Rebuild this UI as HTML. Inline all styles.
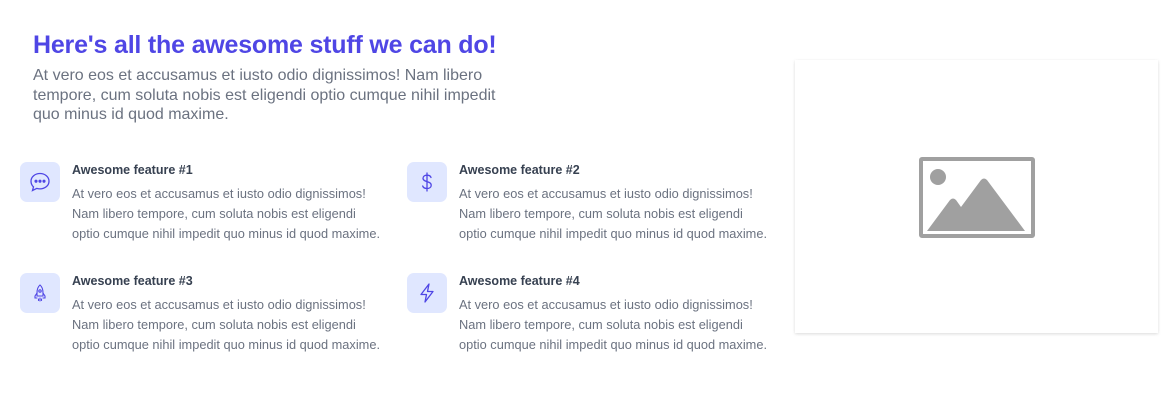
<!DOCTYPE html>
<html><head><meta charset="utf-8"><style>
*{margin:0;padding:0;box-sizing:border-box}
body{width:1176px;height:400px;background:#fff;font-family:"Liberation Sans",sans-serif;position:relative;overflow:hidden}
h1{position:absolute;left:33px;top:31px;font-size:25px;font-weight:bold;color:#4f46e5;white-space:nowrap;letter-spacing:-0.2px}
.sub{position:absolute;left:33px;top:66px;font-size:16px;line-height:19.5px;color:#6b7280;white-space:nowrap}
.f{position:absolute}
.ic{position:absolute;left:0;top:0;width:40px;height:40px;border-radius:7px;background:#e0e7ff;display:flex;align-items:center;justify-content:center}
.t{position:absolute;left:52px;top:1px;font-size:12.5px;font-weight:bold;color:#374151;white-space:nowrap}
.d{position:absolute;left:52px;top:22px;font-size:12.8px;line-height:20px;color:#6b7280;white-space:nowrap}
.card{position:absolute;left:795px;top:60px;width:363px;height:273px;background:#fff;box-shadow:0 1px 3px rgba(0,0,0,.15)}
</style></head><body>
<h1>Here's all the awesome stuff we can do!</h1>
<div class="sub">At vero eos et accusamus et iusto odio dignissimos! Nam libero<br>tempore, cum soluta nobis est eligendi optio cumque nihil impedit<br>quo minus id quod maxime.</div>

<div class="f" style="left:20px;top:162px">
<div class="ic"><svg width="24" height="24" viewBox="0 0 24 24" fill="none" stroke="#4f46e5" stroke-width="1.3"><path d="M12 3.5c5 0 9 3.4 9 7.7s-4 7.7-9 7.7c-1.2 0-2.3-.2-3.3-.5L4.5 20.5l1-3.6C4 15.5 3 13.4 3 11.2 3 6.9 7 3.5 12 3.5z"/><circle cx="8" cy="11.2" r=".9" fill="#4f46e5"/><circle cx="12" cy="11.2" r=".9" fill="#4f46e5"/><circle cx="16" cy="11.2" r=".9" fill="#4f46e5"/></svg></div>
<div class="t">Awesome feature #1</div>
<div class="d">At vero eos et accusamus et iusto odio dignissimos!<br>Nam libero tempore, cum soluta nobis est eligendi<br>optio cumque nihil impedit quo minus id quod maxime.</div></div>

<div class="f" style="left:407px;top:162px">
<div class="ic"><svg width="24" height="24" viewBox="0 0 24 24" fill="none" stroke="#4f46e5" stroke-width="1.3" stroke-linecap="round"><path d="M12 3v18M16 7.5c-.5-1.5-2-2.3-4-2.3-2.3 0-4 1.2-4 3.1 0 4.2 8.2 2.4 8.2 6.9 0 2-1.8 3.3-4.2 3.3-2.2 0-3.8-.9-4.3-2.5"/></svg></div>
<div class="t">Awesome feature #2</div>
<div class="d">At vero eos et accusamus et iusto odio dignissimos!<br>Nam libero tempore, cum soluta nobis est eligendi<br>optio cumque nihil impedit quo minus id quod maxime.</div></div>

<div class="f" style="left:20px;top:273px">
<div class="ic"><svg width="24" height="24" viewBox="0 0 24 24" fill="none" stroke="#4f46e5" stroke-width="1.1" stroke-linecap="round"><path d="M12 4c2.5 2 3 5 3 8v3H9v-3c0-3 .5-6 3-8z"/><circle cx="12" cy="10" r="1.2"/><path d="M9 12l-2 3v2h2M15 12l2 3v2h-2M12 17v3M10.5 18v1.5M13.5 18v1.5"/></svg></div>
<div class="t">Awesome feature #3</div>
<div class="d">At vero eos et accusamus et iusto odio dignissimos!<br>Nam libero tempore, cum soluta nobis est eligendi<br>optio cumque nihil impedit quo minus id quod maxime.</div></div>

<div class="f" style="left:407px;top:273px">
<div class="ic"><svg width="24" height="24" viewBox="0 0 24 24" fill="none" stroke="#4f46e5" stroke-width="1.3" stroke-linejoin="round"><path d="M14 3L6 13.5h5.5L10 21l8-10.5h-5.5z"/></svg></div>
<div class="t">Awesome feature #4</div>
<div class="d">At vero eos et accusamus et iusto odio dignissimos!<br>Nam libero tempore, cum soluta nobis est eligendi<br>optio cumque nihil impedit quo minus id quod maxime.</div></div>

<div class="card"><svg style="position:absolute;left:124px;top:97px" width="116" height="81" viewBox="0 0 116 81"><rect x="2" y="2" width="112" height="77" fill="none" stroke="#a0a0a0" stroke-width="4" rx="1"/><circle cx="19" cy="20" r="8" fill="#a0a0a0"/><path d="M8 74L31 43Q34 40 37 43L42 50 62 23Q65 20 68 23L106 74Z" fill="#a0a0a0"/></svg></div>
</body></html>
